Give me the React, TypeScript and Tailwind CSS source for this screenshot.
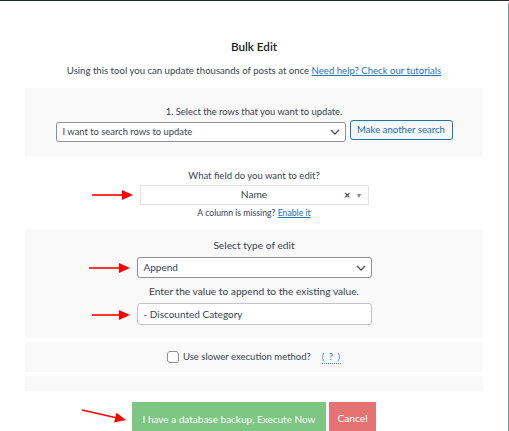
import React from "react";

const Chevron = () => (
  <svg width="10" height="6" viewBox="0 0 10 6" className="shrink-0">
    <path d="M1 1 L5 5 L9 1" fill="none" stroke="#50575e" strokeWidth="1.3" />
  </svg>
);

const Arrow = ({ x1, y1, x2, y2 }: { x1: number; y1: number; x2: number; y2: number }) => {
  const dx = x2 - x1;
  const dy = y2 - y1;
  const len = Math.sqrt(dx * dx + dy * dy);
  const ux = dx / len;
  const uy = dy / len;
  const hl = 11;
  const hw = 5;
  const bx = x2 - ux * hl;
  const by = y2 - uy * hl;
  const p1 = `${bx - uy * hw},${by + ux * hw}`;
  const p2 = `${bx + uy * hw},${by - ux * hw}`;
  return (
    <g>
      <line x1={x1} y1={y1} x2={bx + ux} y2={by + uy} stroke="#ff0000" strokeWidth="1.6" />
      <polygon points={`${x2},${y2} ${p1} ${p2}`} fill="#ff0000" />
    </g>
  );
};

export default function App() {
  return (
    <div
      className="relative w-[509px] h-[431px] overflow-hidden bg-white border-t border-[#23282d] text-[#3c434a]"
      style={{ fontFamily: 'Lato, "Noto Sans", Arial, sans-serif' }}
    >
      <div className="absolute right-0 top-[2px] bottom-0 w-px bg-[#8c8f94]" />
      <div className="w-[508px] flex flex-col items-center">
        <div className="h-[36px]" />
        <div className="text-[11.7px] font-semibold leading-[18px] text-[#1d2327]">Bulk Edit</div>
        <div className="mt-[9px] text-[9.6px] leading-[14px] whitespace-nowrap">
          Using this tool you can update thousands of posts at once{" "}
          <span className="text-[#2271b1] underline">Need help? Check our tutorials</span>
        </div>

        <div className="mt-[10px] w-[458px] h-[69px] bg-[#f9f9f9] flex flex-col items-center pt-[17px]">
          <div className="text-[9.4px] leading-[14px] whitespace-nowrap">1. Select the rows that you want to update.</div>
          <div className="flex items-start gap-[4px] mt-[1px]">
            <div className="mt-[2px] w-[290px] h-[20px] bg-white border border-[#8c8f94] rounded-[3px] flex items-center justify-between pl-[6px] pr-[5px] text-[9.4px]">
              <span className="whitespace-nowrap">I want to search rows to update</span>
              <Chevron />
            </div>
            <div className="w-[103px] h-[20px] border border-[#2271b1] rounded-[3px] bg-[#f6f7f7] text-[#2271b1] text-[9.6px] flex items-center justify-center whitespace-nowrap">
              Make another search
            </div>
          </div>
        </div>

        <div className="h-[72px] flex flex-col items-center pt-[12px]">
          <div className="text-[9.5px] leading-[14px] whitespace-nowrap">What field do you want to edit?</div>
          <div className="mt-[2px] w-[229px] h-[20px] bg-white border border-[#e2e2e2] flex items-center relative">
            <span className="flex-1 text-center text-[10.2px] text-[#444]">Name</span>
            <span className="absolute right-[17px] top-[1px] text-[11px] font-bold text-[#444]">×</span>
            <span className="absolute right-[5px] top-[4px] text-[7px] text-[#888]">▼</span>
          </div>
          <div className="mt-[1px] text-[8.7px] leading-[14px] whitespace-nowrap">
            A column is missing? <span className="text-[#2271b1] underline">Enable it</span>
          </div>
        </div>

        <div className="w-[458px] h-[109px] bg-[#f9f9f9] flex flex-col items-center pt-[8px]">
          <div className="text-[10.2px] leading-[16px] whitespace-nowrap">Select type of edit</div>
          <div className="mt-[4px] w-[235px] h-[21px] bg-white border border-[#8c8f94] rounded-[3px] flex items-center justify-between pl-[6px] pr-[5px] text-[10px]">
            <span>Append</span>
            <Chevron />
          </div>
          <div className="mt-[6px] text-[10.2px] leading-[14px] whitespace-nowrap">Enter the value to append to the existing value.</div>
          <div className="mt-[5px] w-[235px] h-[22px] bg-white border border-[#c3c4c7] rounded-[3px] flex items-center pl-[6px] text-[10px]">
            - Discounted Category
          </div>
        </div>

        <div className="mt-[4px] w-[458px] h-[30px] bg-[#f9f9f9] flex items-center justify-center text-[9.5px]">
          <span className="w-[12px] h-[12px] rounded-[3px] border border-[#8c8f94] bg-white mr-[4px]" />
          <span className="whitespace-nowrap">Use slower execution method?</span>
          <span className="ml-[11px] text-[#3582c4] border-b border-dotted border-[#3582c4] leading-[12px] tracking-[1px]">( ? )</span>
        </div>

        <div className="mt-[4px] w-[458px] h-[15px] bg-[#f9f9f9]" />

        <div className="mt-[11px] flex gap-[3px]">
          <div className="w-[194px] h-[34px] bg-[#7dc683] text-white text-[10px] flex items-center justify-center whitespace-nowrap">
            I have a database backup, Execute Now
          </div>
          <div className="w-[47px] h-[34px] bg-[#e57373] text-white text-[10.2px] flex items-center justify-center">
            Cancel
          </div>
        </div>
      </div>

      <svg className="absolute left-0 top-0 pointer-events-none" width="509" height="431">
        <Arrow x1={92} y1={194} x2={133} y2={194} />
        <Arrow x1={89} y1={267} x2={130} y2={267} />
        <Arrow x1={92} y1={314} x2={130} y2={314} />
        <Arrow x1={82} y1={409} x2={126} y2={419} />
      </svg>
    </div>
  );
}
